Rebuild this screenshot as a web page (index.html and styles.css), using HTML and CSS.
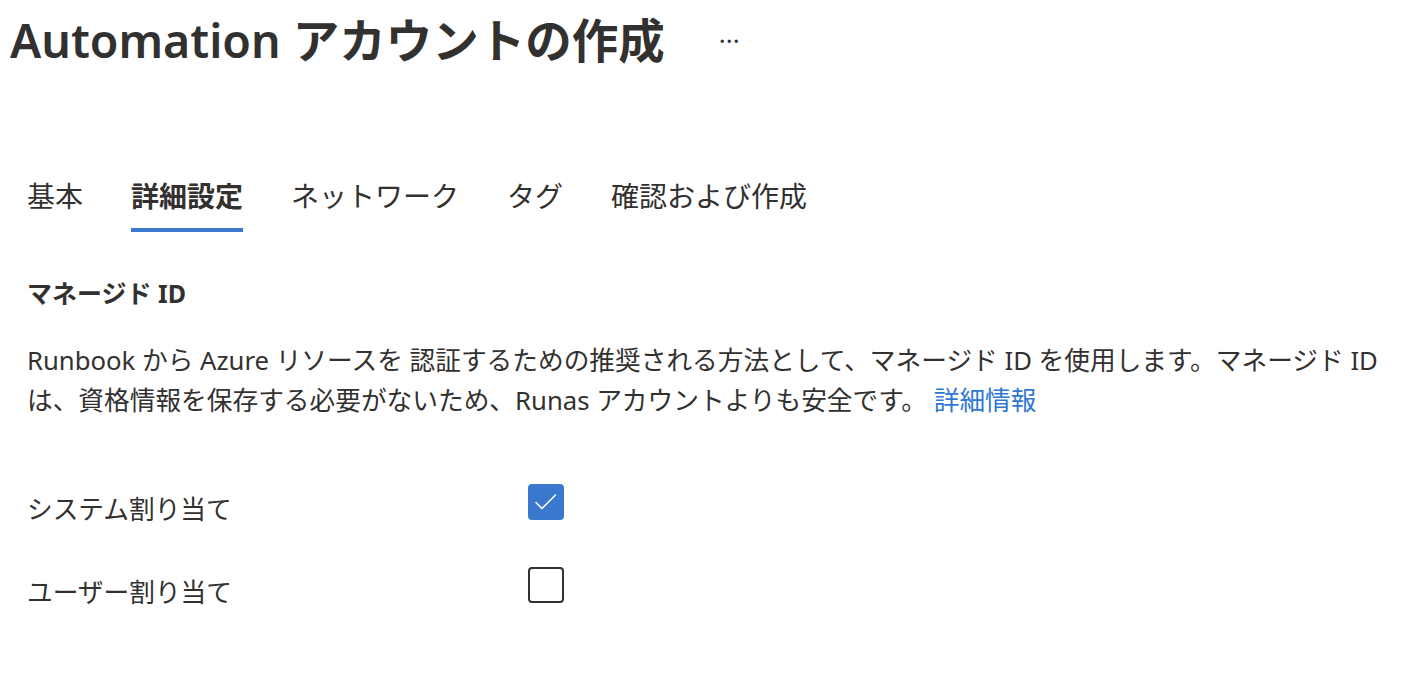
FILE: index.html
```html
<!DOCTYPE html>
<html lang="ja">
<head>
<meta charset="utf-8">
<link rel="stylesheet" href="styles.css">
</head>
<body>
<div class="page">
  <header class="title-bar">
    <h1 class="title">Automation アカウントの作成</h1>
    <span class="more">···</span>
  </header>
  <nav class="tabs">
    <span class="tab">基本</span>
    <span class="tab active">詳細設定</span>
    <span class="tab">ネットワーク</span>
    <span class="tab">タグ</span>
    <span class="tab">確認および作成</span>
  </nav>
  <section class="content">
    <h2 class="section-title">マネージド ID</h2>
    <p class="desc">Runbook から Azure リソースを 認証するための推奨される方法として、マネージド ID を使用します。マネージド ID<br>は、資格情報を保存する必要がないため、Runas アカウントよりも安全です。 <a class="link" href="#">詳細情報</a></p>
    <div class="rows">
      <div class="row">
        <span class="label">システム割り当て</span>
        <span class="checkbox checked">
          <svg viewBox="0 0 36 36" width="36" height="36"><path d="M8 18.5 L14 24.5 L27.5 11" fill="none" stroke="#fff" stroke-width="1.6" stroke-linecap="round" stroke-linejoin="round"/></svg>
        </span>
      </div>
      <div class="row">
        <span class="label">ユーザー割り当て</span>
        <span class="checkbox"></span>
      </div>
    </div>
  </section>
</div>
</body>
</html>
```

FILE: styles.css
```css
html, body {
  margin: 0;
  padding: 0;
  background: #ffffff;
}
body {
  font-family: "Noto Sans", "Noto Sans CJK JP", sans-serif;
  color: #323130;
}
.page {
  width: 1420px;
  height: 684px;
  overflow: hidden;
}
.title-bar {
  display: flex;
  align-items: center;
  padding: 10px 0 0 10px;
  height: 60px;
}
.title {
  margin: 0;
  font-size: 46.5px;
  font-weight: 600;
  line-height: 60px;
  letter-spacing: 0;
}
.more {
  margin-left: 54px;
  font-size: 26px;
  color: #323130;
  letter-spacing: 0;
}
.tabs {
  display: flex;
  gap: 48px;
  padding-left: 27px;
  margin-top: 106px;
}
.tab {
  font-family: "Noto Sans CJK JP", sans-serif;
  font-size: 28px;
  line-height: 38px;
  padding-bottom: 14px;
  border-bottom: 4px solid transparent;
  color: #323130;
}
.tab.active {
  font-weight: 700;
  border-bottom-color: #3a78d0;
}
.content {
  padding-left: 27px;
}
.section-title {
  margin: 44px 0 0 0;
  font-size: 25px;
  font-weight: 700;
  line-height: 34px;
}
.desc {
  margin: 31px 0 0 0;
  font-size: 25.7px;
  line-height: 40px;
}
.link {
  color: #2f78d2;
  text-decoration: none;
}
.rows {
  display: flex;
  flex-direction: column;
  gap: 47px;
  margin-top: 63px;
}
.row {
  display: flex;
  align-items: center;
  height: 36px;
}
.label {
  width: 501px;
  font-size: 25.7px;
  line-height: 36px;
  padding-top: 16px;
}
.checkbox {
  width: 36px;
  height: 36px;
  box-sizing: border-box;
  border: 2px solid #323130;
  border-radius: 4px;
  display: flex;
}
.checkbox.checked {
  background: #3a78d0;
  border-color: #3a78d0;
}
.checkbox.checked svg {
  margin: -2px;
}
```
